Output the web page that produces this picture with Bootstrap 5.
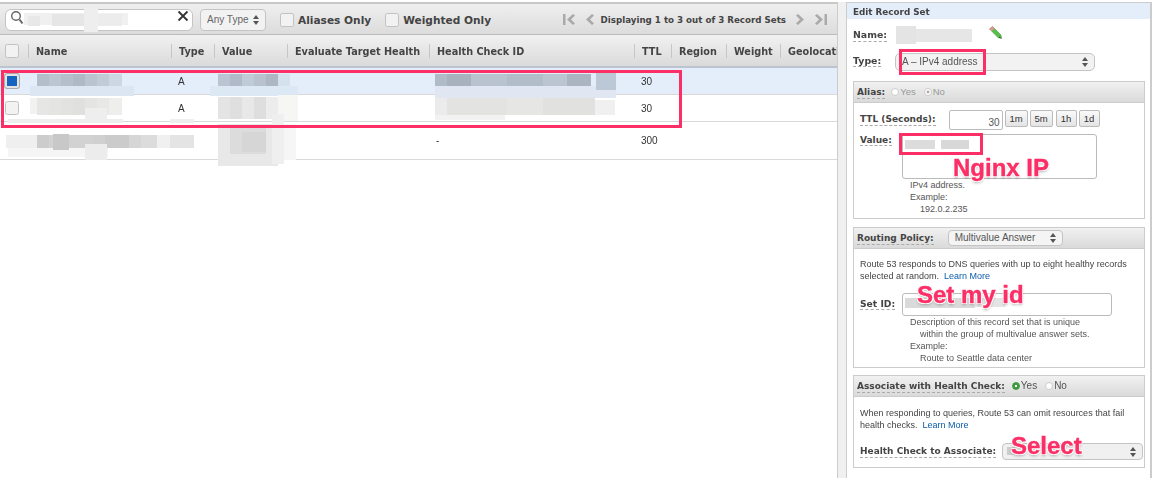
<!DOCTYPE html>
<html lang="en">
<head>
<meta charset="utf-8">
<title>Edit Record Set</title>
<link href="https://cdn.jsdelivr.net/npm/bootstrap@5.3.0/dist/css/bootstrap.min.css" rel="stylesheet">
<style>
html,body{margin:0;height:478px;overflow:hidden;background:#fff}
body{position:relative;font:9px/12px "Liberation Sans",Arial,sans-serif;color:#444}
.page{height:478px;padding-top:2px;filter:blur(.25px)}
.lbl{font:bold 9px/12px "DejaVu Sans",Verdana,sans-serif;color:#444;white-space:nowrap}
.dot{border-bottom:1px dashed #aaa}
.vlab{width:42px;flex:none}
.listpane{width:838px;flex:none;border-top:2px solid #c8c8c8;border-right:1px solid #ccc;overflow:hidden}
.gutter{width:8px;flex:none;background:#f0f0f0}
.tools{height:31px;padding:1px 0 0 5px;background:linear-gradient(#efefef,#dcdcdc);border-bottom:1px solid #bbb}
.search{width:188px;height:22px;background:#fff;border:1px solid #c4c4c4;border-radius:6px;padding:0 3px 0 4px}
.anytype{width:66px;height:22px;margin-left:7px;font-size:10px;padding:0 4px 0 6px;border-radius:4px;color:#666;border-color:#c4c4c4;background-color:#f2f2f2}
.form-select{background-image:url("data:image/svg+xml,%3Csvg xmlns='http://www.w3.org/2000/svg' width='8' height='12'%3E%3Cpath d='M4 1l3 4H1zM4 11L1 7h6z' fill='%23555'/%3E%3C/svg%3E");background-size:8px 12px;background-position:right 5px center;line-height:12px;min-height:0}
.chk{width:14px;height:14px;margin:0;flex:none;border-color:#c2c2c2;border-radius:4px;background-color:#f2f2f2;float:none}
.chk.on{background:#1565c0;border:2px solid #e4e4e4;box-shadow:0 0 0 1px #aaa}
.filt{margin-left:14px;gap:4px}
.filt .lbl{font-size:10.6px}
.pager{margin-left:auto;padding-right:10px;color:#999}
.pager .lbl{font-size:8.7px;margin:0 9px 0 6px}
.pg2{margin-left:10px}
.rec{table-layout:fixed;width:837px;margin:0;--bs-table-bg:transparent;border-collapse:separate;border-spacing:0}
.rec th{height:33px;background:linear-gradient(#f1f1f1,#dadada);border-bottom:2px solid #bcc4d0;padding:2px 0 0 8px;font:bold 9.7px/12px "DejaVu Sans",Verdana,sans-serif;color:#444;white-space:nowrap;overflow:hidden;vertical-align:middle;position:relative}
.rec th+th::before{content:"";position:absolute;left:0;top:9px;bottom:8px;border-left:1px solid #c6c6c6}
.rec td{padding:1px 0 0 7px;border-bottom:1px solid #d9d9d9;font-size:10px;color:#333;vertical-align:middle;background:transparent}
.rec th:first-child,.rec td:first-child{padding:0 0 0 5px}
.r1 td{height:27px;background:#e4eefa}
.r2 td{height:27px}
.r3 td{height:38px}
.editpane{width:306px;flex:none;height:476px;border:1px solid #ccc;border-bottom:0;border-right:2px solid #ccc}
.edithead{height:16px;padding:3px 6px 0;background:#e4eefa;font-size:8.8px}
.nm{padding:10px 6px 0;height:33px}
.nm .lbl,.ty .lbl{font-size:9.4px}
.pencil{margin-left:102px;margin-top:-3px}
.ty{padding:1px 0 0 6px;height:29px}
.ty .lbl{margin-top:2px}
.ty .form-select{width:200px;height:18px;padding:0 0 0 6px;font-size:10px;color:#555;background-color:#f2f2f2;border-radius:5px;border-color:#c4c4c4}
.box{margin:0 5px 8px 6px;border-radius:0;border:1px solid #ccc;--bs-card-inner-border-radius:0}
.box>.card-header{height:21px;padding:0 3px;display:flex;align-items:center;background:linear-gradient(#f1f1f1,#dadada);border-bottom:1px solid #ccc;border-radius:0}
.box>.card-body{padding:0}
.b1{height:138px}.b2{height:141px;margin-bottom:7px}.b3{height:93px}
.rad{color:#999;font-size:9.5px;margin-left:6px}
.rad.act{color:#555;margin-left:7px;font-size:10px}
.rd{display:inline-block;width:8px;height:8px;border-radius:50%;border:1px solid #ccc;background:#fff;margin-right:1px;vertical-align:-1px}
.rd.nodis{background:radial-gradient(#aaa 30%,#fff 40%)}
.rd.yes{background:radial-gradient(#fff 25%,#3d9b3d 35%);border-color:#3d9b3d}
.rad .rd+.rd,.rd.nxt{margin-left:8px}
.ttl{padding:7px 0 0 6px;height:30px}
.ttl .lbl{margin-top:3px}
.ttl .form-control{width:54px;height:20px;margin-left:13px;padding:5px 2px 0 0;border-radius:2px;text-align:right;font-size:10px;line-height:12px;color:#555;border-color:#bbb;min-height:0}
.tbtn{height:17px;width:23px;padding:0;margin-left:2px;font-size:9.5px;line-height:15px;border:1px solid #bbb;border-radius:2px;background:linear-gradient(#fafafa,#e4e4e4);color:#333}
.tbtn.nar{width:21px}
.tbtn.gapl{margin-left:3px}
.valrow{padding:1px 0 0 6px;height:46px}
.field{border:1px solid #bbb;border-radius:3px;background:#fff}
.valrow .field{width:195px;height:45px}
.hint{padding-left:56px;margin:0;color:#555;font-size:9px;line-height:12px}
.hint .ind{padding-left:10px;display:block}
.ptext{padding:9px 6px 0;color:#444;font-size:9px;line-height:12px;margin:0}
.ptext a{color:#0b5cab;text-decoration:none}
.pol{width:115px;height:16px;margin-left:14px;padding:0 0 0 6px;font-size:10px;color:#555;background-color:#f4f4f4;border-color:#c4c4c4;border-radius:4px}
.sid{padding:10px 0 0 6px;height:34px}
.sid .field{width:210px;height:23px}
.sid .lbl{font-size:9.2px}
.t3{padding-top:10px}
.hlth{padding:12px 0 0 6px}
.hlth .form-select{width:141px;height:17px;margin-left:6px;padding:0;background-color:#f0f0f0;border-color:#c4c4c4;border-radius:4px}
.mosaic{position:absolute;left:0;top:0;pointer-events:none;filter:blur(.7px)}
.anno{position:absolute;border:3px solid #fb2f66;pointer-events:none}
.a1{left:1px;top:70px;width:681px;height:58px}
.a2{left:899px;top:49px;width:87px;height:26px}
.a3{left:899px;top:133px;width:84px;height:22px}
.note{position:absolute;font:bold 24px/28px "Liberation Sans",Arial,sans-serif;color:#fb2f66;-webkit-text-stroke:.4px #fb2f66;text-shadow:1px 1px 0 #fff,-1px -1px 0 #fff,1px -1px 0 #fff,-1px 1px 0 #fff,0 2px 3px rgba(0,0,0,.3);white-space:nowrap}
.n1{left:953px;top:154px}
.n2{left:917px;top:281px}
.n3{left:1011px;top:432px}
</style>
</head>
<body>
<div class="page d-flex">
  <div class="listpane">
    <div class="tools d-flex align-items-center">
      <div class="search d-flex justify-content-between">
        <svg width="14" height="15" viewBox="0 0 14 15"><circle cx="6" cy="6" r="4.300" fill="none" stroke="#666" stroke-width="1.400"/><path d="M9.500 9.500l3 4" stroke="#666" stroke-width="2"/></svg>
        <svg width="12" height="12" viewBox="0 0 12 12"><path d="M1.500 1.500l9 9M10.500 1.500l-9 9" stroke="#333" stroke-width="1.800"/></svg>
      </div>
      <select class="form-select anytype"><option>Any Type</option></select>
      <div class="filt d-flex align-items-center"><input class="form-check-input chk" type="checkbox"><span class="lbl">Aliases Only</span></div>
      <div class="filt d-flex align-items-center"><input class="form-check-input chk" type="checkbox"><span class="lbl">Weighted Only</span></div>
      <div class="pager d-flex align-items-center">
        <svg width="13" height="11" viewBox="0 0 13 11"><path d="M0 0h2.500v11H0zM10 0l2 1.500L8 5.500l4 4L10 11 4 5.500z" fill="#aaa"/></svg>
        <svg class="pg2" width="9" height="11" viewBox="0 0 9 11"><path d="M6 0l2 1.500L4 5.500l4 4L6 11 0 5.500z" fill="#aaa"/></svg>
        <span class="lbl">Displaying 1 to 3 out of 3 Record Sets</span>
        <svg width="9" height="11" viewBox="0 0 9 11"><path d="M3 0L1 1.500l4 4-4 4L3 11l6-5.500z" fill="#aaa"/></svg>
        <svg class="pg2" width="13" height="11" viewBox="0 0 13 11"><path d="M13 0h-2.500v11H13zM3 0L1 1.500l4 4-4 4L3 11l6-5.500z" fill="#aaa"/></svg>
      </div>
    </div>
    <table class="table rec">
      <colgroup><col style="width:28px"><col style="width:143px"><col style="width:43px"><col style="width:73px"><col style="width:142px"><col style="width:205px"><col style="width:37px"><col style="width:55px"><col style="width:54px"><col></colgroup>
      <thead><tr>
        <th><input class="form-check-input chk" type="checkbox"></th><th>Name</th><th>Type</th><th>Value</th><th>Evaluate Target Health</th><th>Health Check ID</th><th>TTL</th><th>Region</th><th>Weight</th><th>Geolocation</th>
      </tr></thead>
      <tbody>
        <tr class="r1"><td><input class="form-check-input chk on" type="checkbox" checked></td><td></td><td>A</td><td></td><td></td><td></td><td>30</td><td></td><td></td><td></td></tr>
        <tr class="r2"><td><input class="form-check-input chk" type="checkbox"></td><td></td><td>A</td><td></td><td></td><td></td><td>30</td><td></td><td></td><td></td></tr>
        <tr class="r3"><td></td><td></td><td></td><td></td><td></td><td>-</td><td>300</td><td></td><td></td><td></td></tr>
      </tbody>
    </table>
  </div>
  <div class="gutter"></div>
  <div class="editpane">
    <div class="edithead lbl">Edit Record Set</div>
    <div class="nm d-flex align-items-start">
      <span class="lbl dot">Name:</span>
      <svg class="pencil" width="13" height="13" viewBox="0 0 13 13"><path d="M3.500 0.500L12 9l.5 3.500L9 11.500 0.500 3z" fill="#58c04a" stroke="#3f8f2c" stroke-width=".5"/><path d="M3.500 0.500L5.500 2.500 2.500 5 0.500 3z" fill="#ee8f9a"/><path d="M10.500 10.500l2 2-3-1z" fill="#444"/></svg>
    </div>
    <div class="ty d-flex align-items-start">
      <span class="lbl vlab"><span class="dot">Type:</span></span>
      <select class="form-select"><option>A – IPv4 address</option></select>
    </div>
    <div class="card box b1">
      <div class="card-header"><span class="lbl dot">Alias:</span><span class="rad"><i class="rd"></i>Yes<i class="rd nodis nxt"></i>No</span></div>
      <div class="card-body">
        <div class="ttl d-flex align-items-start">
          <span class="lbl dot">TTL (Seconds):</span>
          <input class="form-control" value="30">
          <button class="btn tbtn" type="button">1m</button><button class="btn tbtn" type="button">5m</button><button class="btn tbtn nar gapl" type="button">1h</button><button class="btn tbtn nar" type="button">1d</button>
        </div>
        <div class="valrow d-flex align-items-start">
          <span class="lbl vlab"><span class="dot">Value:</span></span>
          <div class="field"></div>
        </div>
        <p class="hint">IPv4 address.<br>Example:<span class="ind">192.0.2.235</span></p>
      </div>
    </div>
    <div class="card box b2">
      <div class="card-header"><span class="lbl dot">Routing Policy:</span><select class="form-select pol"><option>Multivalue Answer</option></select></div>
      <div class="card-body">
        <p class="ptext">Route 53 responds to DNS queries with up to eight healthy records selected at random. &nbsp;<a href="#">Learn More</a></p>
        <div class="sid d-flex align-items-center">
          <span class="lbl vlab"><span class="dot">Set ID:</span></span>
          <div class="field"></div>
        </div>
        <p class="hint">Description of this record set that is unique<span class="ind">within the group of multivalue answer sets.</span>Example:<span class="ind">Route to Seattle data center</span></p>
      </div>
    </div>
    <div class="card box b3">
      <div class="card-header"><span class="lbl dot">Associate with Health Check:</span><span class="rad act"><i class="rd yes"></i>Yes<i class="rd nxt"></i>No</span></div>
      <div class="card-body">
        <p class="ptext t3">When responding to queries, Route 53 can omit resources that fail health checks. &nbsp;<a href="#">Learn More</a></p>
        <div class="hlth d-flex align-items-center">
          <span class="lbl dot">Health Check to Associate:</span>
          <select class="form-select"><option></option></select>
        </div>
      </div>
    </div>
  </div>
</div>

<svg class="mosaic" width="1158" height="478" aria-hidden="true">
  <!-- search -->
  <rect x="24" y="13" width="104" height="12" fill="#f0f0f0"/>
  <rect x="28" y="16" width="12" height="10" fill="#e8e8e8"/><rect x="52" y="14" width="36" height="12" fill="#e6e6e6"/><rect x="84" y="8" width="14" height="24" fill="#eee"/><rect x="98" y="14" width="24" height="12" fill="#ececec"/>
  <!-- row 1 name -->
  <rect x="30" y="86" width="104" height="10" fill="#dce6f3"/>
  <rect x="37" y="74" width="12" height="12" fill="#b4bdca"/><rect x="49" y="74" width="12" height="12" fill="#bcc6d2"/><rect x="61" y="74" width="12" height="12" fill="#b4bfca"/><rect x="73" y="74" width="12" height="12" fill="#afb8c4"/><rect x="85" y="74" width="12" height="12" fill="#b9c4d0"/><rect x="97" y="74" width="12" height="12" fill="#c0cbd6"/><rect x="109" y="74" width="13" height="12" fill="#cdd7e2"/>
  <!-- row 1 value -->
  <rect x="210" y="86" width="88" height="10" fill="#dde8f5"/>
  <rect x="218" y="74" width="12" height="12" fill="#bac4d2"/><rect x="230" y="74" width="12" height="12" fill="#b0bac8"/><rect x="242" y="74" width="12" height="12" fill="#c0cbd8"/><rect x="254" y="74" width="12" height="12" fill="#b8c2cf"/><rect x="266" y="74" width="12" height="12" fill="#aeb6c4"/><rect x="278" y="74" width="12" height="12" fill="#d6e1ee"/>
  <!-- row 1 health id -->
  <rect x="435" y="86" width="181" height="12" fill="#e0e7f3"/>
  <rect x="435" y="74" width="12" height="12" fill="#b0bbc8"/><rect x="447" y="74" width="24" height="12" fill="#a8b2bf"/><rect x="471" y="74" width="36" height="12" fill="#b8c3cf"/><rect x="507" y="74" width="36" height="12" fill="#b2bdca"/><rect x="543" y="74" width="24" height="12" fill="#bac5d1"/><rect x="567" y="74" width="24" height="12" fill="#abb4c1"/>
  <rect x="596" y="73" width="20" height="17" fill="#bcc8d5"/>
  <!-- row 2 name -->
  <rect x="30" y="98" width="7" height="16" fill="#f2f2f2"/>
  <rect x="37" y="98" width="12" height="17" fill="#e6e6e4"/><rect x="49" y="98" width="12" height="17" fill="#e4e4e2"/><rect x="61" y="98" width="12" height="17" fill="#e2e2e0"/><rect x="73" y="98" width="12" height="17" fill="#e0e0de"/><rect x="85" y="98" width="12" height="17" fill="#e4e4e2"/><rect x="97" y="98" width="12" height="17" fill="#e8e8e6"/><rect x="109" y="98" width="13" height="17" fill="#eeeeec"/>
  <rect x="85" y="108" width="22" height="14" fill="#eeeeee"/><rect x="8" y="119" width="115" height="4" fill="#eeeeee"/><rect x="170" y="119" width="24" height="4" fill="#eeeeee"/>
  <!-- row 2 value -->
  <rect x="218" y="97" width="12" height="22" fill="#e4e4e4"/><rect x="230" y="97" width="12" height="22" fill="#dfdfdf"/><rect x="242" y="97" width="12" height="22" fill="#e8e8e8"/><rect x="254" y="97" width="12" height="22" fill="#dedede"/><rect x="266" y="97" width="12" height="22" fill="#ececec"/><rect x="278" y="95" width="20" height="26" fill="#f6f6f4"/>
  <!-- row 2 health id -->
  <rect x="435" y="98" width="12" height="17" fill="#ebebeb"/><rect x="447" y="98" width="60" height="17" fill="#e3e3e1"/><rect x="507" y="98" width="36" height="17" fill="#e6e6e4"/><rect x="543" y="98" width="52" height="17" fill="#e1e1df"/><rect x="595" y="100" width="20" height="15" fill="#f0f0f0"/><rect x="435" y="115" width="70" height="5" fill="#f2f2f2"/>
  <!-- row 3 name -->
  <rect x="6" y="135" width="31" height="13" fill="#efefef"/><rect x="8" y="148" width="100" height="9" fill="#f5f5f5"/>
  <rect x="37" y="135" width="12" height="13" fill="#cccccc"/><rect x="49" y="135" width="12" height="13" fill="#d2d2d2"/><rect x="53" y="134" width="16" height="16" fill="#c8c8c8"/><rect x="69" y="135" width="24" height="13" fill="#d2d2d2"/><rect x="93" y="135" width="12" height="13" fill="#d0d0d0"/><rect x="105" y="135" width="24" height="13" fill="#cbcbcb"/><rect x="129" y="135" width="12" height="13" fill="#d6d6d6"/><rect x="141" y="135" width="16" height="13" fill="#dcdcdc"/><rect x="157" y="135" width="13" height="13" fill="#f0f0f0"/><rect x="170" y="135" width="24" height="13" fill="#e4e4e4"/>
  <rect x="85" y="144" width="22" height="16" fill="#ececec"/>
  <!-- row 3 value -->
  <rect x="218" y="124" width="60" height="42" fill="#e8e8e8"/><rect x="230" y="128" width="36" height="26" fill="#dcdcdc"/><rect x="242" y="132" width="24" height="20" fill="#d6d6d6"/><rect x="272" y="114" width="12" height="50" fill="#efefef"/><rect x="284" y="124" width="12" height="36" fill="#f6f6f6"/>
  <!-- right pane -->
  <rect x="896" y="26" width="20" height="18" fill="#e4e4e4"/><rect x="916" y="29" width="56" height="13" fill="#e6e6e6"/>
  <rect x="905" y="140" width="30" height="9" fill="#dcdcdc"/><rect x="941" y="140" width="28" height="9" fill="#d8d8d8"/>
  <rect x="905" y="298" width="70" height="10" fill="#dadada"/><rect x="975" y="298" width="30" height="9" fill="#e4e4e4"/>
  <rect x="1007" y="447" width="8" height="8" fill="#cccccc"/>
</svg>

<div class="anno a1"></div>
<div class="anno a2"></div>
<div class="anno a3"></div>
<div class="note n1">Nginx IP</div>
<div class="note n2">Set my id</div>
<div class="note n3">Select</div>
<script src="https://cdn.jsdelivr.net/npm/bootstrap@5.3.0/dist/js/bootstrap.bundle.min.js"></script>
</body>
</html>
